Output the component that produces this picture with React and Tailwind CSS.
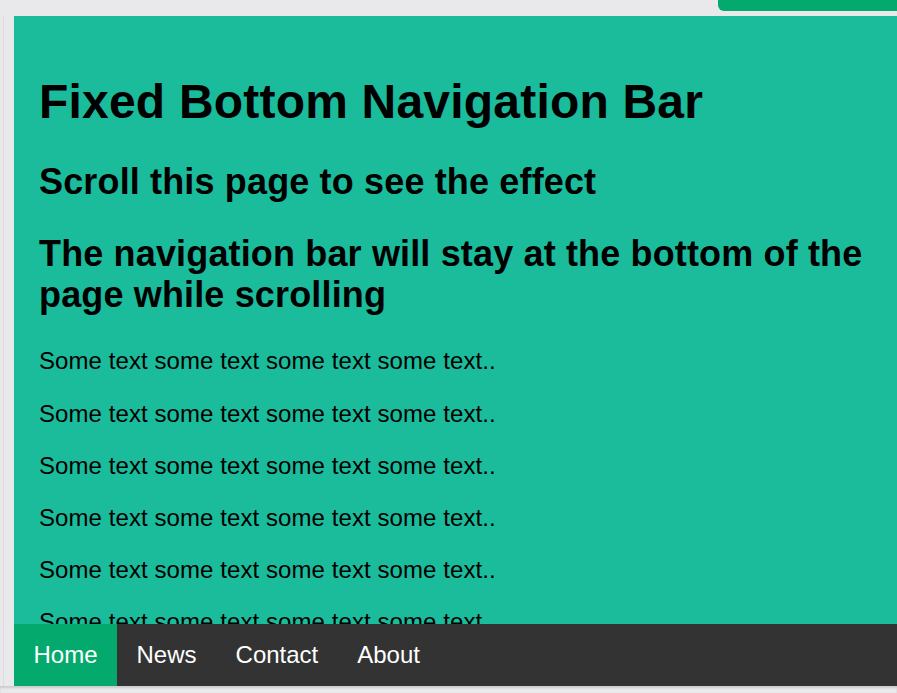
import React from "react";

export default function App() {
  const lines = Array.from({ length: 8 });
  return (
    <div
      className="w-[897px] h-[693px] bg-[#e9e9eb] overflow-hidden flex flex-col"
      style={{ fontFamily: '"Liberation Sans", Arial, sans-serif' }}
    >
      <div className="h-[16px] flex justify-end shrink-0">
        <div className="w-[179px] h-[11px] bg-[#04aa6d] rounded-bl-[6px]" />
      </div>
      <div className="flex flex-1 min-h-0">
        <div className="w-[14px] shrink-0 flex">
          <div className="w-[3px]" />
          <div className="w-[1px] bg-[#dcdcde]" />
        </div>
        <div className="flex-1 flex flex-col min-w-0">
          <div className="h-[608px] bg-[#1abc9c] overflow-hidden pl-[25px] pr-[20px] pt-[26px] text-black">
            <h1 className="text-[48px] leading-[1.15] font-bold mt-[32px] mb-[32px] tracking-[0.2px]">
              Fixed Bottom Navigation Bar
            </h1>
            <h2 className="text-[36px] leading-[1.15] font-bold mb-[30px] tracking-[0.15px]">
              Scroll this page to see the effect
            </h2>
            <h2 className="text-[36px] leading-[1.15] font-bold mb-[32px] tracking-[0.15px]">
              The navigation bar will stay at the bottom of the page while scrolling
            </h2>
            {lines.map((_, i) => (
              <p key={i} className="text-[24px] leading-[1.15] mb-[24.6px] tracking-[0.08px]">
                Some text some text some text some text..
              </p>
            ))}
          </div>
          <nav className="h-[62px] bg-[#333333] flex shrink-0">
            <a className="bg-[#04aa6d] text-white text-[24px] leading-[28px] px-[19.5px] py-[17px]">Home</a>
            <a className="text-white text-[24px] leading-[28px] px-[19.5px] py-[17px]">News</a>
            <a className="text-white text-[24px] leading-[28px] px-[19.5px] py-[17px]">Contact</a>
            <a className="text-white text-[24px] leading-[28px] px-[19.5px] py-[17px]">About</a>
          </nav>
        </div>
      </div>
      <div className="h-[7px] shrink-0 bg-[#e9e9eb] shadow-[inset_0_2px_2px_rgba(0,0,0,0.12)]" />
    </div>
  );
}
